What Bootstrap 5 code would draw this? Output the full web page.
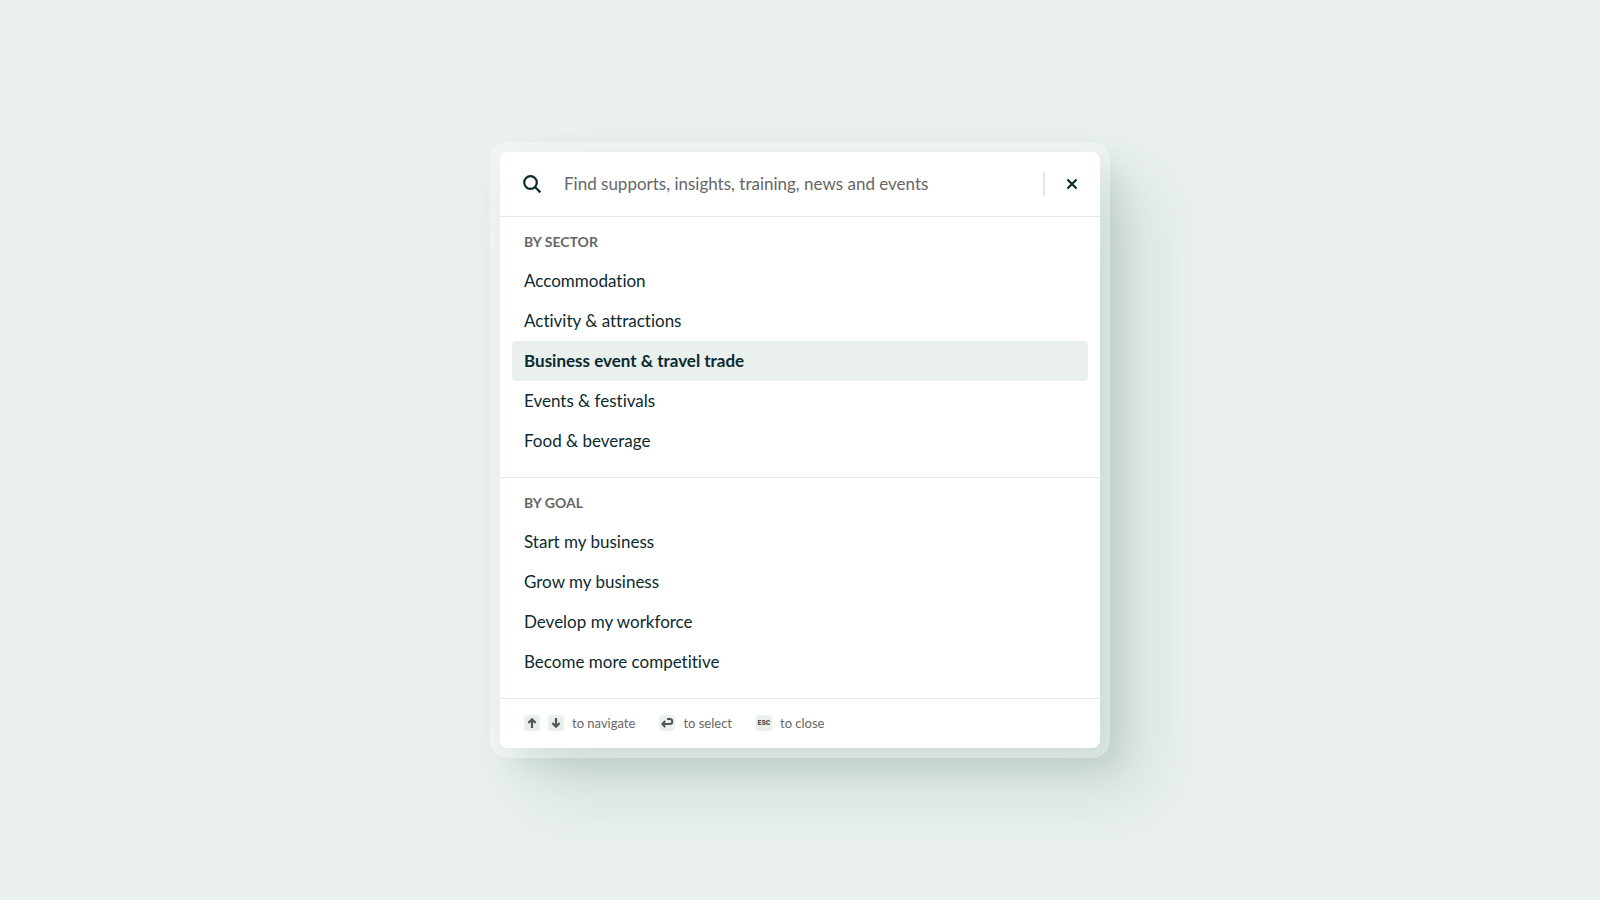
<!DOCTYPE html>
<html lang="en">
<head>
<meta charset="utf-8">
<meta name="viewport" content="width=device-width, initial-scale=1">
<title>Search</title>
<link href="https://cdn.jsdelivr.net/npm/bootstrap@5.3.0/dist/css/bootstrap.min.css" rel="stylesheet">
<style>
  :root {
    --ink: #0c2a30;
    --muted: #666666;
    --mist: #e9f0ee;
    --rule: #e4e8e7;
  }
  body {
    background: var(--mist);
    color: var(--ink);
    font-family: Lato, "Liberation Sans", sans-serif;
    font-size: 17px;
    line-height: 24px;
    font-variant-ligatures: no-common-ligatures;
  }
  .palette {
    max-width: 600px;
    border-radius: 8px;
    box-shadow:
      0 0 0 10px rgba(255, 255, 255, .36),
      14px 14px 32px rgba(80, 130, 115, .22),
      40px 40px 64px rgba(90, 115, 106, .18);
  }
  .palette-head { height: 65px; padding: 0 12px 0 22px; border-bottom: 1px solid var(--rule); }
  .palette-field { color: var(--ink); padding: 0; margin-left: 22px; font-size: 17px; }
  .palette-field::placeholder { color: var(--muted); opacity: 1; }
  .palette-split { width: 2px; height: 24px; background: var(--rule); margin-right: 11px; }
  .palette-close { width: 32px; height: 32px; color: var(--ink); }
  .palette-group { padding: 0 12px 16px; border-bottom: 1px solid var(--rule); }
  .palette-title { height: 44px; padding: 13px 12px 7px; color: var(--muted); font-size: 14px; line-height: 24px; font-weight: 700; }
  .palette-option { height: 40px; padding: 8px 12px; border-radius: 4px; color: inherit; }
  .palette-option:hover, .palette-option.chosen { background: var(--mist); font-weight: 700; }
  .palette-foot { height: 48px; padding: 0 24px; margin-bottom: 1px; color: var(--muted); font-size: 13px; }
  .keycap {
    width: 16px; height: 16px; padding: 0; border-radius: 4px;
    background: var(--mist); color: #555;
    font: 900 8px/16px "Roboto Condensed", Lato, "Liberation Sans", sans-serif;
  }
</style>
</head>
<body class="min-vh-100 d-flex align-items-center justify-content-center p-3">
<main class="palette bg-white w-100">
  <form class="palette-head d-flex align-items-center" role="search">
    <label for="q" class="d-flex">
      <svg width="20" height="20" viewBox="0 0 20 20" fill="none" stroke="currentColor" stroke-width="2.2" role="img" aria-label="Search"><circle cx="8.500" cy="8.500" r="6.300"/><path d="M13 13l5.400 5.400"/></svg>
    </label>
    <input id="q" type="text" class="palette-field form-control border-0 shadow-none bg-transparent flex-grow-1" placeholder="Find supports, insights, training, news and events">
    <span class="palette-split flex-shrink-0"></span>
    <button type="button" class="palette-close btn border-0 p-0 d-flex align-items-center justify-content-center flex-shrink-0" aria-label="Close">
      <svg width="12" height="12" viewBox="0 0 12 12" fill="none" stroke="currentColor" stroke-width="2.2"><path d="M1.500 1.500l9 9M10.500 1.500l-9 9"/></svg>
    </button>
  </form>

  <section class="palette-group">
    <h2 class="palette-title m-0">BY SECTOR</h2>
    <nav class="d-flex flex-column" aria-label="By sector">
      <a class="palette-option text-decoration-none" href="#">Accommodation</a>
      <a class="palette-option text-decoration-none" href="#">Activity &amp; attractions</a>
      <a class="palette-option text-decoration-none chosen" href="#">Business event &amp; travel trade</a>
      <a class="palette-option text-decoration-none" href="#">Events &amp; festivals</a>
      <a class="palette-option text-decoration-none" href="#">Food &amp; beverage</a>
    </nav>
  </section>

  <section class="palette-group">
    <h2 class="palette-title m-0">BY GOAL</h2>
    <nav class="d-flex flex-column" aria-label="By goal">
      <a class="palette-option text-decoration-none" href="#">Start my business</a>
      <a class="palette-option text-decoration-none" href="#">Grow my business</a>
      <a class="palette-option text-decoration-none" href="#">Develop my workforce</a>
      <a class="palette-option text-decoration-none" href="#">Become more competitive</a>
    </nav>
  </section>

  <footer class="palette-foot d-flex align-items-center gap-4">
    <div class="d-flex align-items-center gap-2">
      <kbd class="keycap d-flex"><svg width="16" height="16" viewBox="0 0 16 16" fill="none" stroke="currentColor" stroke-width="2.200"><path d="M8 13V4.500M4.300 8L8 4.300 11.700 8"/></svg></kbd>
      <kbd class="keycap d-flex"><svg width="16" height="16" viewBox="0 0 16 16" fill="none" stroke="currentColor" stroke-width="2.200"><path d="M8 3v8.500M4.300 8L8 11.700 11.700 8"/></svg></kbd>
      <span>to navigate</span>
    </div>
    <div class="d-flex align-items-center gap-2">
      <kbd class="keycap d-flex"><svg width="16" height="16" viewBox="0 0 16 16" fill="none" stroke="currentColor" stroke-width="2"><path d="M6.200 5.800L3.400 9l2.800 3.200M3.600 9h7.200a2.500 2.500 0 0 0 0-5H8"/></svg></kbd>
      <span>to select</span>
    </div>
    <div class="d-flex align-items-center gap-2">
      <kbd class="keycap d-flex justify-content-center">ESC</kbd>
      <span>to close</span>
    </div>
  </footer>
</main>
<script src="https://cdn.jsdelivr.net/npm/bootstrap@5.3.0/dist/js/bootstrap.bundle.min.js"></script>
</body>
</html>
